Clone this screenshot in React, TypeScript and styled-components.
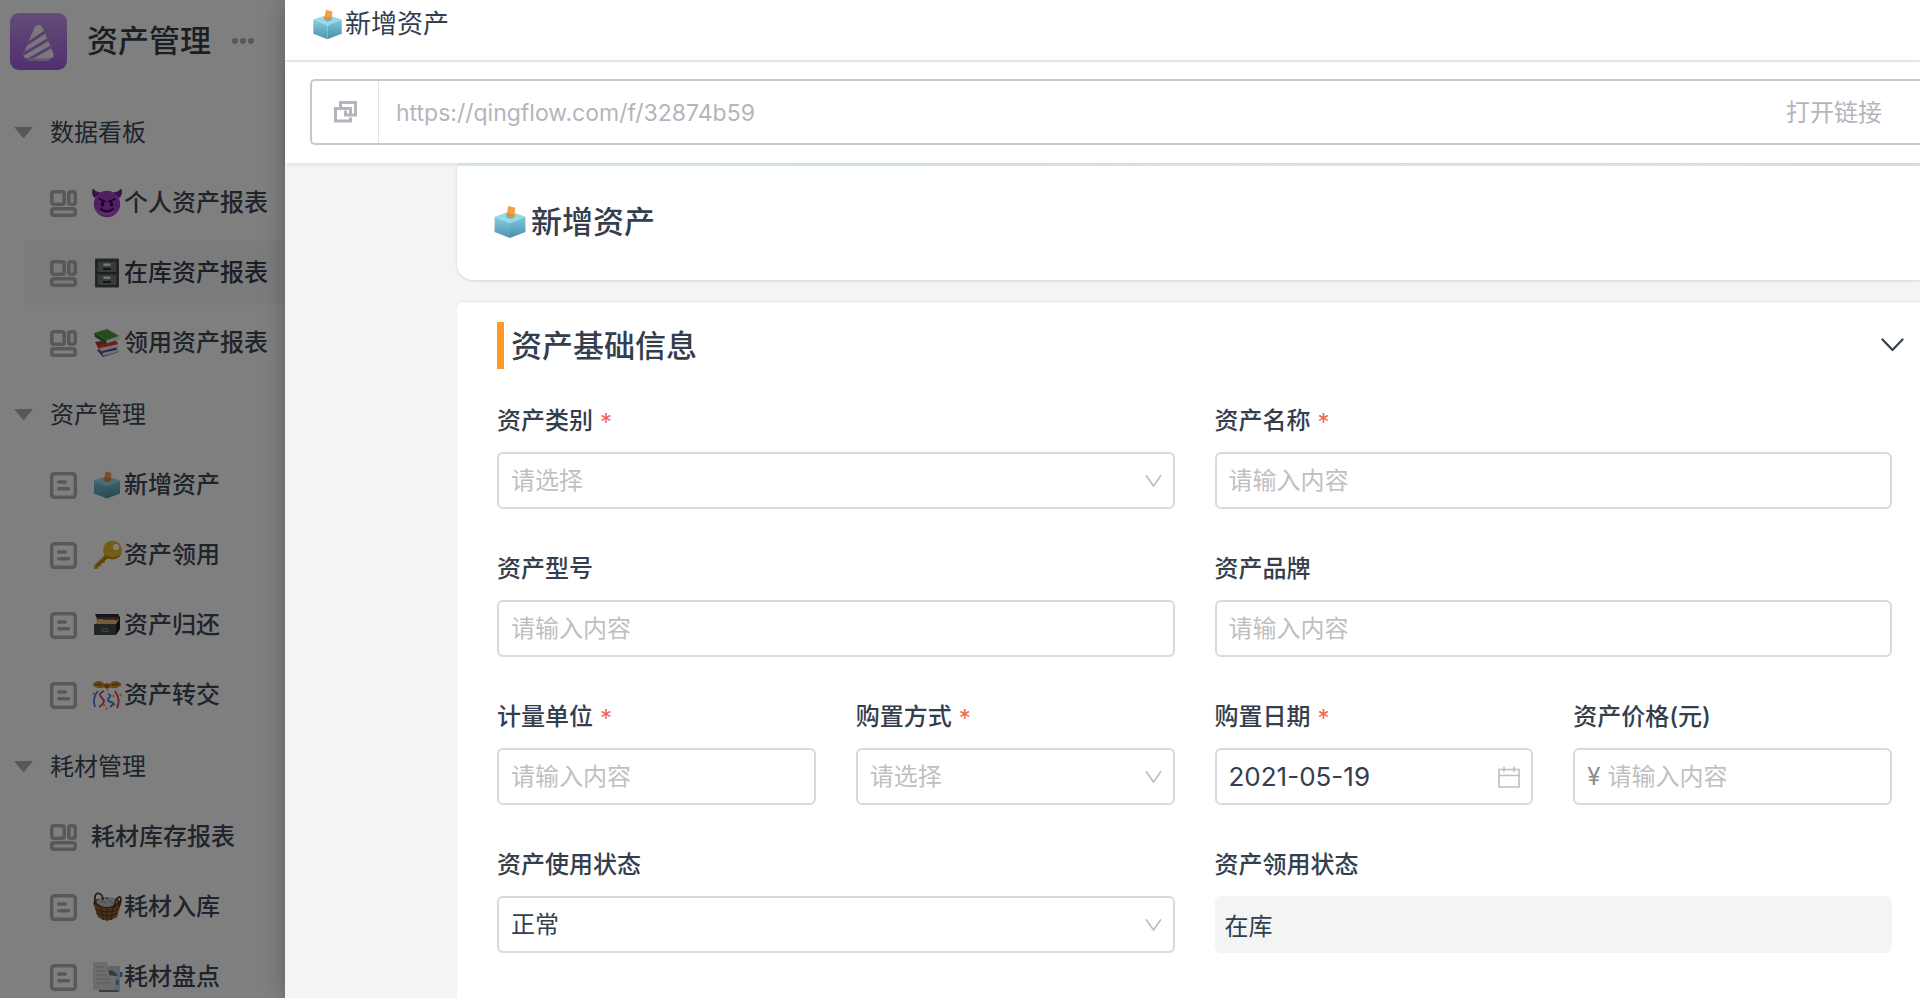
import React, { ReactNode } from 'react';
import styled, { createGlobalStyle, css } from 'styled-components';

const ink = '#343e4d';
const inkSoft = '#3f4857';
const iconGrey = '#aeb1b6';
const placeholder = '#bfbfbf';
const line = '#dadadc';

const GlobalStyle = createGlobalStyle`
  *, *::before, *::after { box-sizing: border-box; }
  body {
    margin: 0;
    color: ${ink};
    background: #f4f4f6;
    font-family: Inter, "Noto Sans CJK SC", sans-serif;
    font-size: 24px;
    line-height: 32px;
  }
  button, input, select { font: inherit; color: inherit; }
  button { padding: 0; border: 0; background: none; cursor: pointer; }
  h1, h2, ul { margin: 0; padding: 0; font-weight: 500; }
`;

const Page = styled.div`
  display: flex;
  height: 100vh;
  overflow: hidden;
`;

/* ---------- sidebar ---------- */

const Sidebar = styled.aside`
  position: relative;
  flex: 0 0 285px;
  overflow: hidden;
  background: #fff;
`;

const Mask = styled.div`
  position: absolute;
  inset: 0;
  background: rgba(0, 0, 0, 0.5);
`;

const Brand = styled.header`
  display: flex;
  align-items: center;
  padding: 13px 8px 31px 10px;
`;

const BrandName = styled.h1`
  margin: 0 20px;
  padding-bottom: 2px;
  font-size: 31px;
  line-height: 40px;
  white-space: nowrap;
`;

const IconButton = styled.button`
  display: flex;
  padding-bottom: 2px;
`;

const NavGroup = styled.section`
  padding-bottom: 2px;
`;

const GroupToggle = styled.button`
  display: flex;
  align-items: center;
  gap: 17px;
  width: 100%;
  height: 64px;
  margin-bottom: 6px;
  padding-left: 14px;
  color: ${inkSoft};
`;

const NavList = styled.ul`
  list-style: none;
`;

const NavLink = styled.a<{ $active?: boolean }>`
  display: flex;
  align-items: center;
  height: 64px;
  margin: 0 0 6px 24px;
  padding-left: 26px;
  color: ${inkSoft};
  text-decoration: none;
  white-space: nowrap;
  ${(p) =>
    p.$active &&
    css`
      background: #f6f6f7;
      color: ${ink};
      font-weight: 500;
    `}
`;

const NavText = styled.span`
  display: flex;
  align-items: center;
  gap: 1px;
  margin-left: 14px;
`;

/* ---------- drawer ---------- */

const Drawer = styled.main`
  position: relative;
  display: flex;
  flex: 1;
  flex-direction: column;
  min-width: 0;
  box-shadow: -2px 0 20px rgba(0, 0, 0, 0.22);
  background: #f4f4f6;
`;

const DrawerHeader = styled.header`
  display: flex;
  align-items: center;
  height: 62px;
  padding: 0 0 12px 25px;
  border-bottom: 2px solid #e8e7ee;
  background: #fff;
`;

const DrawerTitle = styled.h2`
  font-size: 26px;
  font-weight: 400;
`;

const LinkBar = styled.div`
  position: relative;
  padding: 17px 0 18px 25px;
  background: #fff;
  box-shadow: 0 1px 4px rgba(0, 0, 0, 0.1);
`;

const LinkBox = styled.div`
  display: flex;
  height: 66px;
  border: 2px solid #c9c7d3;
  border-right: 0;
  border-radius: 5px 0 0 5px;
  color: #b5b4bd;
`;

const CopyButton = styled.button`
  display: flex;
  flex: 0 0 67px;
  align-items: center;
  justify-content: center;
  border-right: 1px solid #e2e1e8;
`;

const UrlInput = styled.input`
  flex: 1;
  min-width: 0;
  padding: 2px 17px 0;
  border: 0;
  outline: 0;
  background: none;
  font-size: 23px;
`;

const OpenButton = styled.button`
  padding: 2px 38px 0 16px;
`;

const Scroller = styled.div`
  flex: 1;
  min-height: 0;
  padding-left: 172px;
  overflow: hidden;
`;

const TitleCard = styled.section`
  display: flex;
  align-items: center;
  gap: 2px;
  height: 117px;
  margin-bottom: 22px;
  padding-left: 34px;
  border-bottom-left-radius: 16px;
  background:
    linear-gradient(90deg, #dceef3, #d8ebf2 30%, #dfeaea 45%, #f5e7da 60%, #eeeada 68%, #dfeee9 84%, #d9e9f1 92%) top / 100% 3px no-repeat,
    #fff;
  box-shadow: 0 1px 3px rgba(0, 0, 0, 0.12);
`;

const CardTitle = styled.h1`
  font-size: 31px;
  line-height: 40px;
`;

const FormCard = styled.section`
  min-height: 100%;
  padding: 20px 16px 40px 40px;
  border-top-left-radius: 6px;
  background: #fff;
  box-shadow: 0 -1px 1px rgba(0, 0, 0, 0.06);
`;

const SectionHead = styled.header`
  display: flex;
  align-items: center;
  justify-content: space-between;
  margin-bottom: 36px;
`;

const SectionTitle = styled.h2`
  padding-left: 7px;
  border-left: 7px solid #ff9a27;
  font-size: 31px;
  line-height: 47px;
`;

const FormGrid = styled.form`
  display: grid;
  grid-template-columns: repeat(4, 1fr);
  gap: 44px 40px;
  padding-right: 12px;
`;

const FieldBox = styled.div<{ $span: number }>`
  display: flex;
  flex-direction: column;
  gap: 15px;
  grid-column: span ${(p) => p.$span};
  min-width: 0;
`;

const Label = styled.label`
  display: flex;
  height: 32px;
  font-weight: 500;
`;

const Required = styled.span`
  margin-left: 7px;
  padding-top: 2px;
  color: #f5654e;
  font-weight: 400;
`;

const Control = styled.div<{ $readOnly?: boolean }>`
  display: flex;
  align-items: center;
  height: 57px;
  padding: 0 11px 0 12px;
  border: 2px solid ${line};
  border-radius: 6px;
  background: #fff;
  ${(p) =>
    p.$readOnly &&
    css`
      padding: 0 8px;
      border-color: #f3f5f5;
      background: #f3f5f5;
    `}
`;

const TextInput = styled.input`
  flex: 1;
  min-width: 0;
  width: 100%;
  height: 100%;
  padding: 0;
  border: 0;
  outline: 0;
  background: none;
  &::placeholder { color: ${placeholder}; opacity: 1; }
`;

const DateInput = styled(TextInput)`
  font-size: 26px;
`;

const SelectInput = styled.select<{ $empty: boolean }>`
  flex: 1;
  min-width: 0;
  height: 100%;
  padding: 0;
  border: 0;
  outline: 0;
  appearance: none;
  background: none;
  color: ${(p) => (p.$empty ? placeholder : ink)};
`;

const Prefix = styled.span`
  margin-right: 7px;
  color: #8c8c8c;
`;

/* ---------- icons ---------- */

const Svg = ({ w, h = w, vb, children }: { w: number; h?: number; vb?: string; children: ReactNode }) => (
  <svg width={w} height={h} viewBox={vb ?? `0 0 ${w} ${h}`} fill="none" aria-hidden="true">
    {children}
  </svg>
);

const LogoIcon = () => (
  <Svg w={57}>
    <defs>
      <linearGradient id="logo-bg" x1="0" y1="0" x2="0" y2="1">
        <stop offset="0" stopColor="#c69af0" />
        <stop offset="1" stopColor="#a05fe0" />
      </linearGradient>
      <clipPath id="logo-cone">
        <path d="M24.5 14.500Q28.500 9 32.500 14.500L43.500 41Q44.500 45 40 45.500L38.500 47.500H18.500L17 45.500Q12.500 45 13.500 41Z" />
      </clipPath>
    </defs>
    <rect width="57" height="57" rx="9" fill="url(#logo-bg)" />
    <g clipPath="url(#logo-cone)">
      <rect x="10" y="8" width="38" height="40" fill="#f4f0f8" />
      <path d="M14 33L38 17M10 43L44 23M16 48L46 31" stroke="#b07fe2" strokeWidth="3" />
      <path d="M16 46.500H42" stroke="#cfa9ee" strokeWidth="2" />
    </g>
  </Svg>
);

const MoreIcon = () => (
  <Svg w={24} h={8}>
    {[4, 12, 20].map((x) => (
      <circle key={x} cx={x} cy="4" r="3" fill={iconGrey} />
    ))}
  </Svg>
);

const TriangleIcon = () => (
  <Svg w={19} h={12}>
    <path d="M1 .5H18L9.500 11Z" fill={iconGrey} stroke={iconGrey} strokeLinejoin="round" />
  </Svg>
);

const BoardIcon = () => (
  <Svg w={27}>
    <g stroke={iconGrey} strokeWidth="3.600">
      <rect x="1.800" y="1.800" width="12.400" height="12.400" rx="2" />
      <rect x="18.800" y="1.800" width="6.400" height="12.400" rx="2" />
      <rect x="1.800" y="18.800" width="23.400" height="6.400" rx="2" />
    </g>
  </Svg>
);

const FormIcon = () => (
  <Svg w={27}>
    <g stroke={iconGrey} strokeWidth="3.400" strokeLinecap="round">
      <rect x="1.700" y="1.700" width="23.600" height="23.600" rx="2.500" />
      <path d="M8.700 10H15.300M8.700 16.800H18.500" />
    </g>
  </Svg>
);

const CopyIcon = () => (
  <Svg w={23} h={22}>
    <path
      d="M6.500 9V1.500H21.500V14H11.500V9.500M16.500 12.500V7.500H1.500V20H16.500V16.500"
      stroke="#b5b4bd"
      strokeWidth="3"
    />
  </Svg>
);

const ArrowDown = () => (
  <Svg w={17} h={12}>
    <path d="M1.500 1L8.500 11L15.500 1" stroke="#bfbfbf" strokeWidth="1.700" strokeLinecap="round" strokeLinejoin="round" />
  </Svg>
);

const CollapseIcon = () => (
  <Svg w={23} h={14}>
    <path d="M1.500 1.500L11.500 12L21.500 1.500" stroke={ink} strokeWidth="2.200" strokeLinecap="round" strokeLinejoin="round" />
  </Svg>
);

const CalendarIcon = () => (
  <Svg w={22}>
    <path d="M1 3.500H21V21H1ZM1 9.500H21M6 .5V6M16 .5V6" stroke="#bfbfbf" strokeWidth="1.600" />
  </Svg>
);

type EmojiName = 'ballot' | 'devil' | 'cabinet' | 'books' | 'key' | 'fileBox' | 'confetti' | 'basket' | 'pages';

const emojiArt: Record<EmojiName, ReactNode> = {
  ballot: (
    <>
      <defs>
        <linearGradient id="ballot-left" x1="0" y1="0" x2="0" y2="1">
          <stop offset="0" stopColor="#84cede" />
          <stop offset="1" stopColor="#4f93ae" />
        </linearGradient>
        <linearGradient id="ballot-right" x1="0" y1="0" x2="0" y2="1">
          <stop offset="0" stopColor="#7ccbdc" />
          <stop offset="1" stopColor="#4a8dab" />
        </linearGradient>
      </defs>
      <path d="M16 7L29 11.500L16 17L3 11.500Z" fill="#94dbe8" />
      <path d="M3 11.500L16 17V29.500L3 24.500Z" fill="url(#ballot-left)" />
      <path d="M29 11.500L16 17V29.500L29 24.500Z" fill="url(#ballot-right)" />
      <path d="M12 11.500L16 10.500L20 12L16 13.500Z" fill="#6fb3c4" />
      <path d="M14.500 2.500L20.500 4L19.500 12L13 11Z" fill="#f0a24a" />
      <path d="M13.300 8.500L19.900 9.500L19.500 12L13 11Z" fill="#de8e36" />
    </>
  ),
  devil: (
    <>
      <path d="M3.500 11C0 7 1 3 2 1.500C4 4.500 7 5 10 5.500ZM28.500 11C32 7 31 3 30 1.500C28 4.500 25 5 22 5.500Z" fill="#7a1f97" />
      <circle cx="16" cy="17" r="13.200" fill="#a53fc9" />
      <path d="M3.500 20A13.200 13.200 0 0 0 28.500 20C24 27 8 27 3.500 20Z" fill="#d06ae0" opacity=".55" />
      <path d="M8.500 12L14 14.500M23.500 12L18 14.500M10 22Q16 27 22 22" stroke="#2d0a42" strokeWidth="1.800" strokeLinecap="round" />
      <ellipse cx="11.500" cy="17" rx="1.700" ry="2.500" fill="#2d0a42" />
      <ellipse cx="20.500" cy="17" rx="1.700" ry="2.500" fill="#2d0a42" />
    </>
  ),
  cabinet: (
    <>
      <rect x="4" y="1.500" width="24" height="29" rx="1" fill="#4a4f52" />
      <rect x="6" y="4" width="20" height="11.500" fill="#6f7679" stroke="#34383a" />
      <rect x="6" y="17" width="20" height="11.500" fill="#6f7679" stroke="#34383a" />
      <path d="M12.500 6.500H19.500V9H12.500ZM12.500 19.500H19.500V22H12.500Z" fill="#e9ecec" />
      <path d="M12 12H20M12 25H20" stroke="#272b2d" strokeWidth="2" />
    </>
  ),
  books: (
    <>
      <path d="M6 23L24 19L28 25L12 30Z" fill="#4a4fa0" />
      <path d="M11 26L27 22.500V25L12.500 29Z" fill="#e3e3ef" />
      <path d="M4 15L24 11.500L27 20L9 24.500Z" fill="#c22f2b" />
      <path d="M8 21L27 17V20L10 24.500Z" fill="#eee4e0" />
      <path d="M7 18L26 14.500L27 17L8.500 21Z" fill="#dc4038" />
      <path d="M3 6L16 2L28.500 9L15 13.500Z" fill="#4c9a3c" />
      <path d="M15 13.500L28.500 9V12.500L15.500 16.500Z" fill="#e6eddf" />
      <path d="M3 6L15 13.500L15.500 17L4 10Z" fill="#2f7429" />
    </>
  ),
  key: (
    <>
      <path d="M15 15L3.500 26L3 30L6.500 30L7 27.500L10 27L10.500 24L13.500 24L14 21.500L18.500 18.500Z" fill="#d79d1b" />
      <circle cx="21.500" cy="11" r="9.500" fill="#e8bb29" />
      <path d="M13 15A9.500 9.500 0 0 0 30.500 14C26 19 18 19 13 15Z" fill="#c98d12" />
      <circle cx="25" cy="8" r="3" fill="#fff" />
      <path d="M5 28L16 17.500" stroke="#a97510" strokeWidth="1.200" />
    </>
  ),
  fileBox: (
    <>
      <path d="M4 5H27L29 8V10H6Z" fill="#2c3130" />
      <path d="M6 8H27V18H6Z" fill="#594433" />
      <path d="M5 14L7 10H12L13 11H27V18H5Z" fill="#eabd6a" />
      <path d="M13 9.500H18V11H13Z" fill="#3b6fc4" />
      <path d="M19 9.500H24V11H19Z" fill="#c8443a" />
      <path d="M3 15H25V26H3Z" fill="#454a4b" />
      <path d="M25 15L29 8V20L25 26Z" fill="#1e2223" />
      <path d="M11 20H17V22.500H11Z" stroke="#858b8d" />
    </>
  ),
  confetti: (
    <>
      <path d="M16 7C10 0 4 1 1.500 6C6 10 11 10 16 7C21 10 26 10 30.500 6C28 1 22 0 16 7Z" fill="#d08a30" />
      <path d="M4 5.500L11 5.500M28 5.500L21 5.500" stroke="#9a5d17" strokeWidth="1.500" />
      <circle cx="16" cy="7" r="2.700" fill="#a9671c" />
      <path d="M7 12Q1 19 4 28M17 15Q21 16 18 19T20 23T19 28" stroke="#3f78d8" strokeWidth="1.800" />
      <path d="M13 12Q6 15 11 19T8 28M24 12Q30 21 26 29" stroke="#d8385e" strokeWidth="1.800" />
      <path d="M16 11L17 12M22 16L23 18M12 25L14 27M29 15L30 17" stroke="#eaa43a" strokeWidth="2" />
      <path d="M2 14L3 15M22 24L24 26M15 29L16 30" stroke="#e1599b" strokeWidth="2" />
    </>
  ),
  basket: (
    <>
      <ellipse cx="16" cy="12" rx="13.500" ry="5.500" fill="#5b3b20" />
      <path d="M5 11Q10 4 16 8Q22 4 27 11Q22 16 16 16Q9 16 5 11Z" fill="#bdc6d4" />
      <path d="M9 10L15 12M18 9L22 13" stroke="#8792a4" />
      <path d="M2 12Q8 17 16 17Q24 17 30 12L26 26Q16 33 7 26Z" fill="#8f6236" />
      <path d="M4 18Q16 24 28 18M5 22Q16 28 27 22M10 16L12 29M16 17V30M22 16L20 29" stroke="#5d3c1d" strokeWidth="1" />
      <path d="M4 12Q3 1 8 2.500Q12 4 12 9M23 17Q24 8 28 6Q32 6 28 16" stroke="#5b3b20" strokeWidth="1.800" />
    </>
  ),
  pages: (
    <>
      <path d="M11 5H29V31H11Z" fill="#c5c8cc" />
      <path d="M2 1H15L20 9L24 14V29H2Z" fill="#d9dbde" />
      <path d="M15 1C17 6 16 9 20 9C24 9 23 13 27 14L18 14Z" fill="#a5a8ad" />
      <path d="M18 10C23 9 24 12 27 14C24 16 21 14 18 14Z" fill="#6d7075" />
      <path d="M5 6H13M5 10H15M5 14H16M5 18H20M5 22H20" stroke="#b6babf" />
      <path d="M8 30H27" stroke="#777b80" strokeWidth="2" />
      <path d="M29 11H31.500V16H29ZM25 19H27.500V24H25Z" fill="#3b8de0" />
    </>
  ),
};

const Emoji = ({ name, size = 32 }: { name: EmojiName; size?: number }) => (
  <Svg w={size} vb="0 0 32 32">
    {emojiArt[name]}
  </Svg>
);

/* ---------- content ---------- */

type NavItem = { text: string; emoji?: EmojiName; board?: boolean; active?: boolean };

const groups: { title: string; items: NavItem[] }[] = [
  {
    title: '数据看板',
    items: [
      { text: '个人资产报表', emoji: 'devil', board: true },
      { text: '在库资产报表', emoji: 'cabinet', board: true, active: true },
      { text: '领用资产报表', emoji: 'books', board: true },
    ],
  },
  {
    title: '资产管理',
    items: [
      { text: '新增资产', emoji: 'ballot' },
      { text: '资产领用', emoji: 'key' },
      { text: '资产归还', emoji: 'fileBox' },
      { text: '资产转交', emoji: 'confetti' },
    ],
  },
  {
    title: '耗材管理',
    items: [
      { text: '耗材库存报表', board: true },
      { text: '耗材入库', emoji: 'basket' },
      { text: '耗材盘点', emoji: 'pages' },
    ],
  },
];

type FieldProps = { id: string; label: string; span?: number; required?: boolean };

const Field = ({ id, label, span = 1, required, children }: FieldProps & { children: ReactNode }) => (
  <FieldBox $span={span}>
    <Label htmlFor={id}>
      {label}
      {required && <Required>*</Required>}
    </Label>
    {children}
  </FieldBox>
);

const TextField = ({ prefix, ...field }: FieldProps & { prefix?: string }) => (
  <Field {...field}>
    <Control>
      {prefix && <Prefix>{prefix}</Prefix>}
      <TextInput id={field.id} placeholder="请输入内容" />
    </Control>
  </Field>
);

const SelectField = ({ value, ...field }: FieldProps & { value?: string }) => (
  <Field {...field}>
    <Control>
      <SelectInput id={field.id} $empty={!value} defaultValue={value ?? ''}>
        <option value={value ?? ''}>{value ?? '请选择'}</option>
      </SelectInput>
      <ArrowDown />
    </Control>
  </Field>
);

export default function App() {
  return (
    <>
      <GlobalStyle />
      <Page>
        <Sidebar>
          <Brand>
            <LogoIcon />
            <BrandName>资产管理</BrandName>
            <IconButton type="button" aria-label="更多">
              <MoreIcon />
            </IconButton>
          </Brand>
          <nav>
            {groups.map((group) => (
              <NavGroup key={group.title}>
                <GroupToggle type="button">
                  <TriangleIcon />
                  {group.title}
                </GroupToggle>
                <NavList>
                  {group.items.map((item) => (
                    <li key={item.text}>
                      <NavLink href="#" $active={item.active}>
                        {item.board ? <BoardIcon /> : <FormIcon />}
                        <NavText>
                          {item.emoji && <Emoji name={item.emoji} />}
                          {item.text}
                        </NavText>
                      </NavLink>
                    </li>
                  ))}
                </NavList>
              </NavGroup>
            ))}
          </nav>
          <Mask />
        </Sidebar>

        <Drawer>
          <DrawerHeader>
            <Emoji name="ballot" size={35} />
            <DrawerTitle>新增资产</DrawerTitle>
          </DrawerHeader>
          <LinkBar>
            <LinkBox>
              <CopyButton type="button" aria-label="复制链接">
                <CopyIcon />
              </CopyButton>
              <UrlInput aria-label="表单链接" readOnly value="https://qingflow.com/f/32874b59" />
              <OpenButton type="button">打开链接</OpenButton>
            </LinkBox>
          </LinkBar>
          <Scroller>
            <TitleCard>
              <Emoji name="ballot" size={38} />
              <CardTitle>新增资产</CardTitle>
            </TitleCard>
            <FormCard>
              <SectionHead>
                <SectionTitle>资产基础信息</SectionTitle>
                <IconButton type="button" aria-label="收起">
                  <CollapseIcon />
                </IconButton>
              </SectionHead>
              <FormGrid>
                <SelectField id="category" label="资产类别" span={2} required />
                <TextField id="name" label="资产名称" span={2} required />
                <TextField id="model" label="资产型号" span={2} />
                <TextField id="brand" label="资产品牌" span={2} />
                <TextField id="unit" label="计量单位" required />
                <SelectField id="method" label="购置方式" required />
                <Field id="date" label="购置日期" required>
                  <Control>
                    <DateInput id="date" defaultValue="2021-05-19" />
                    <CalendarIcon />
                  </Control>
                </Field>
                <TextField id="price" label="资产价格(元)" prefix="¥" />
                <SelectField id="usage" label="资产使用状态" span={2} value="正常" />
                <Field id="claim" label="资产领用状态" span={2}>
                  <Control $readOnly>
                    <TextInput id="claim" readOnly value="在库" />
                  </Control>
                </Field>
              </FormGrid>
            </FormCard>
          </Scroller>
        </Drawer>
      </Page>
    </>
  );
}
